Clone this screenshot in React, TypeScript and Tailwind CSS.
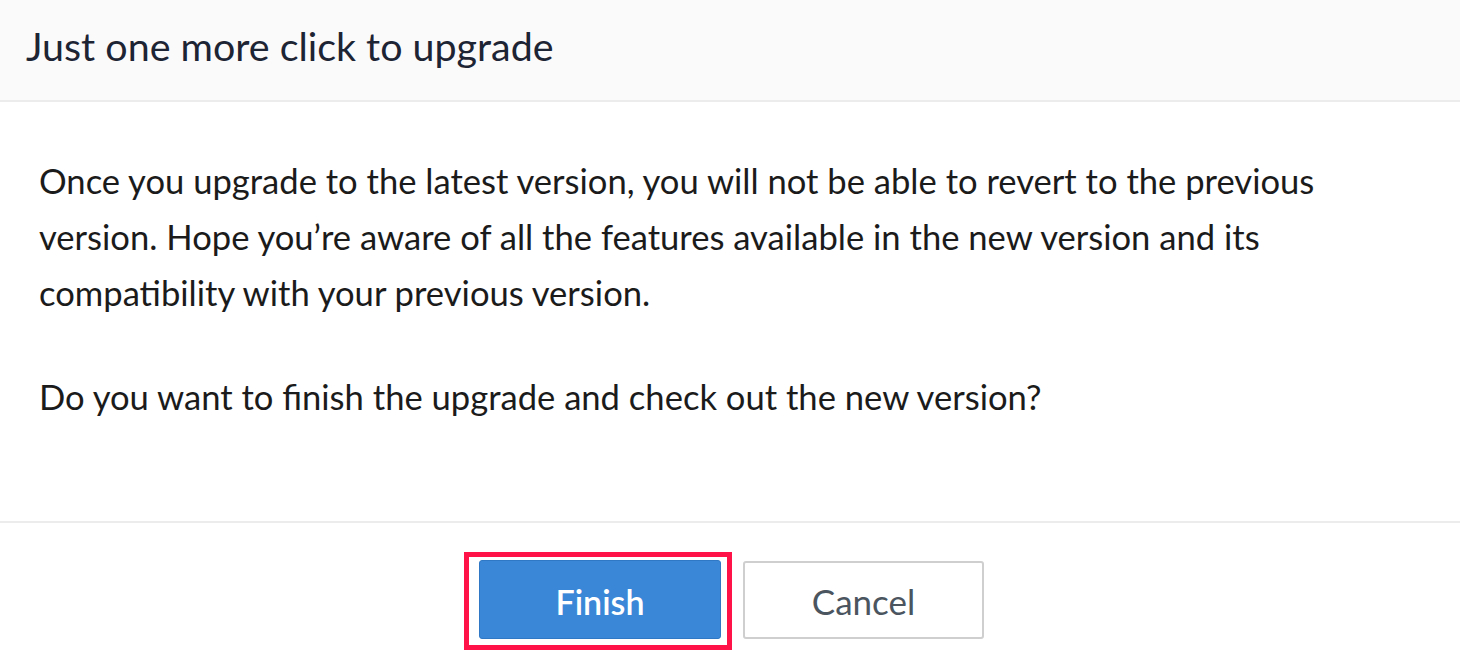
export default function App() {
  return (
    <div className="w-[1460px] h-[668px] bg-white font-['Lato','Liberation_Sans',sans-serif] flex flex-col">
      {/* Header */}
      <div className="h-[102px] bg-[#fafafa] border-b-2 border-[#ececec] flex items-center pl-[26px] pb-[9px]">
        <h2 className="text-[39.4px] text-[#1d2433]">Just one more click to upgrade</h2>
      </div>

      {/* Body */}
      <div className="h-[421px] border-b-2 border-[#ececec] pl-[39px] pr-[100px] pt-[51px] text-[34.6px] leading-[56px] text-[#1b1b1b]">
        <p>
          Once you upgrade to the latest version, you will not be able to revert to the previous
          <br />
          version. Hope you’re aware of all the features available in the new version and its
          <br />
          compatibility with your previous version.
        </p>
        <p className="mt-[48px]">Do you want to finish the upgrade and check out the new version?</p>
      </div>

      {/* Footer */}
      <div className="flex justify-center items-start pt-[29px] gap-[11px] pr-[12px]">
        <div className="border-[5px] border-[#ff1248] pl-[10px] pr-[6px] pt-[3px] pb-[6px]">
          <button className="w-[242px] h-[79px] pt-[3px] rounded-[3px] bg-[#3a87d8] border border-[#2f78c6] text-white text-[34px] font-semibold">
            Finish
          </button>
        </div>
        <button className="mt-[9px] w-[241px] h-[78px] pt-[3px] rounded-[3px] bg-white border-2 border-[#cfcfcf] text-[#4b5560] text-[35px]">
          Cancel
        </button>
      </div>
    </div>
  )
}
